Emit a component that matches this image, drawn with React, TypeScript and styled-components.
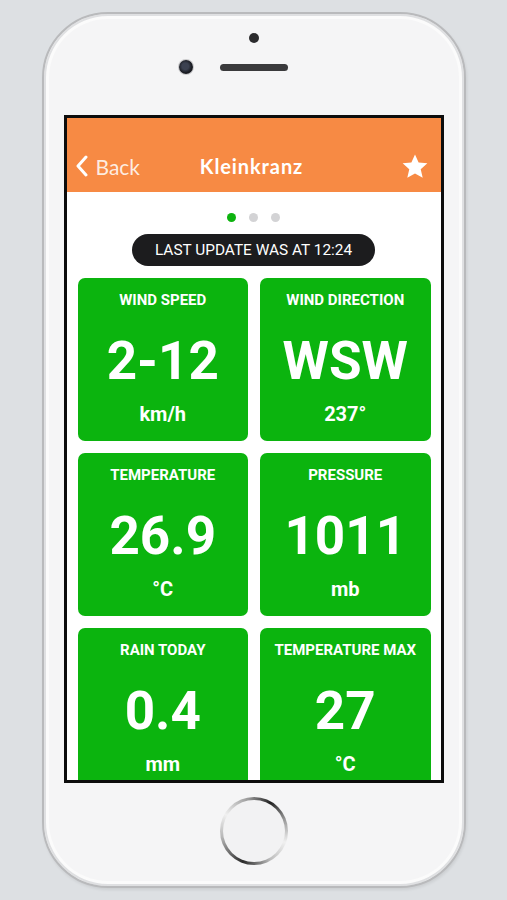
import React from 'react';
import styled, { createGlobalStyle } from 'styled-components';

const GlobalStyle = createGlobalStyle`
  html, body {
    margin: 0;
    padding: 0;
    background: #dde0e3;
  }
  * {
    box-sizing: border-box;
  }
`;

// Data for the tiles
const readings = [
  { label: 'WIND SPEED', value: '2-12', unit: 'km/h' },
  { label: 'WIND DIRECTION', value: 'WSW', unit: '237°' },
  { label: 'TEMPERATURE', value: '26.9', unit: '°C' },
  { label: 'PRESSURE', value: '1011', unit: 'mb' },
  { label: 'RAIN TODAY', value: '0.4', unit: 'mm' },
  { label: 'TEMPERATURE MAX', value: '27', unit: '°C' },
];

// Page + device frame
const Page = styled.div`
  width: 507px;
  height: 900px;
  display: flex;
  justify-content: center;
  padding-top: 12px;
  overflow: hidden;
`;

const Phone = styled.div`
  width: 424px;
  height: 876px;
  flex-shrink: 0;
  border-radius: 66px;
  background: #f5f5f6;
  border: 2px solid #b9babc;
  box-shadow: inset 0 0 0 2px #dfe0e2, inset 0 0 0 5px #fbfbfb, 1px 2px 3px rgba(0, 0, 0, 0.08);
  display: flex;
  flex-direction: column;
  align-items: center;

  & > * {
    flex-shrink: 0;
  }
`;

const SpeakerDot = styled.div`
  width: 10px;
  height: 10px;
  border-radius: 50%;
  background: #2b2b2d;
  margin-top: 19px;
`;

const SensorRow = styled.div`
  width: 100%;
  display: grid;
  grid-template-columns: 1fr auto 1fr;
  align-items: center;
  margin-top: 17px;
`;

const Camera = styled.div`
  justify-self: end;
  margin-right: 27px;
  width: 14px;
  height: 14px;
  border-radius: 50%;
  background: radial-gradient(circle at 45% 45%, #3b4150 0 30%, #1a1c22 60%);
  box-shadow: 0 0 0 1px #c9c9cb;
`;

const SpeakerSlot = styled.div`
  width: 68px;
  height: 7px;
  border-radius: 4px;
  background: #3a3a3c;
`;

const Screen = styled.div`
  margin-top: 41px;
  width: 380px;
  height: 668px;
  border: 3px solid #0c0c0c;
  background: #ffffff;
  overflow: hidden;
  display: flex;
  flex-direction: column;
  align-items: center;

  & > * {
    flex-shrink: 0;
  }
`;

const HomeButton = styled.div`
  margin-top: 14px;
  width: 68px;
  height: 68px;
  border-radius: 50%;
  border: 3px solid transparent;
  background:
    linear-gradient(#f2f2f3, #f2f2f3) padding-box,
    conic-gradient(from 200deg, #2a2a2a, #b8b8b8 60deg, #f0f0f0 100deg, #9a9a9a 150deg, #222 190deg, #9a9a9a 230deg, #f0f0f0 270deg, #bdbdbd 310deg, #2a2a2a) border-box;
`;

// App header
const Header = styled.div`
  width: 100%;
  height: 74px;
  background: #f78a44;
  display: grid;
  grid-template-columns: 1fr auto 1fr;
  align-items: center;
  padding: 22px 12px 0 8px;
  font-family: Lato, 'Open Sans', sans-serif;
  color: #fff;
`;

const BackLink = styled.div`
  display: flex;
  align-items: center;
  gap: 7px;
  font-size: 21px;
  color: rgba(255, 255, 255, 0.85);
`;

const Title = styled.div`
  font-size: 20px;
  font-weight: 700;
  letter-spacing: 0.9px;
`;

const StarWrap = styled.div`
  justify-self: end;
  display: flex;
`;

const Dots = styled.div`
  display: flex;
  gap: 13px;
  margin-top: 21px;
`;

const Dot = styled.div<{ $active?: boolean }>`
  width: 9px;
  height: 9px;
  border-radius: 50%;
  background: ${({ $active }) => ($active ? '#0db30f' : '#d3d3d5')};
`;

const UpdatePill = styled.div`
  margin-top: 12px;
  width: 243px;
  height: 32px;
  border-radius: 16px;
  background: #1c1c1e;
  color: #fff;
  font-family: Roboto, 'Liberation Sans', sans-serif;
  font-size: 15.4px;
  display: flex;
  align-items: center;
  justify-content: center;
`;

const TileGrid = styled.div`
  width: 100%;
  margin-top: 12px;
  padding: 0 10px 0 11px;
  display: grid;
  grid-template-columns: 1fr 1fr;
  grid-auto-rows: 163px;
  gap: 12px;
`;

const Tile = styled.div`
  background: #0bb40e;
  border-radius: 7px;
  display: flex;
  flex-direction: column;
  align-items: center;
  color: #fff;
  font-family: Roboto, 'Liberation Sans', sans-serif;
  font-weight: 700;
`;

const TileLabel = styled.div`
  margin-top: 14px;
  font-size: 15px;
  line-height: 16px;
`;

const TileValue = styled.div`
  margin-top: 22px;
  font-size: 53px;
  line-height: 62px;
`;

const TileUnit = styled.div`
  margin-top: 10px;
  font-size: 20px;
  line-height: 24px;
`;

const ChevronLeft = () => (
  <svg width="14" height="22" viewBox="0 0 14 22">
    <polyline points="11,2 3,11 11,20" fill="none" stroke="#fff" strokeWidth="3" strokeLinecap="round" strokeLinejoin="round" />
  </svg>
);

const Star = () => (
  <svg width="28" height="27" viewBox="0 0 24 23">
    <path d="M12 1.2l3.1 6.9 7.5.7-5.7 5 1.7 7.4L12 17.4l-6.6 3.8 1.7-7.4-5.7-5 7.5-.7z" fill="#fff" />
  </svg>
);

const App = () => {
  return (
    <>
      <GlobalStyle />
      <Page>
        <Phone>
          <SpeakerDot />
          <SensorRow>
            <Camera />
            <SpeakerSlot />
            <span />
          </SensorRow>
          <Screen>
            <Header>
              <BackLink>
                <ChevronLeft />
                Back
              </BackLink>
              <Title>Kleinkranz</Title>
              <StarWrap>
                <Star />
              </StarWrap>
            </Header>
            <Dots>
              <Dot $active />
              <Dot />
              <Dot />
            </Dots>
            <UpdatePill>LAST UPDATE WAS AT 12:24</UpdatePill>
            <TileGrid>
              {readings.map((r) => (
                <Tile key={r.label}>
                  <TileLabel>{r.label}</TileLabel>
                  <TileValue>{r.value}</TileValue>
                  <TileUnit>{r.unit}</TileUnit>
                </Tile>
              ))}
            </TileGrid>
          </Screen>
          <HomeButton />
        </Phone>
      </Page>
    </>
  );
};

export default App;
